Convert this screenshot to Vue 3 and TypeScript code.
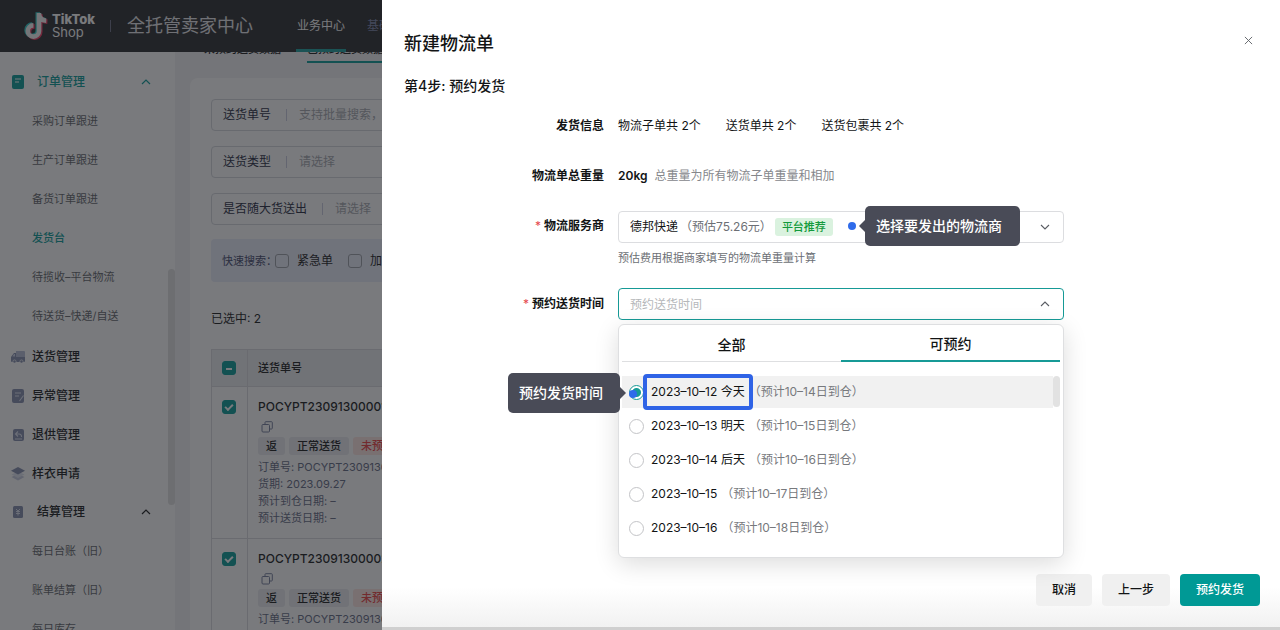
<script setup lang="ts">
import { ref } from 'vue'

interface MenuGroup {
  label: string
  icon: string
  open?: boolean
  active?: boolean
  children?: string[]
}

const menu: MenuGroup[] = [
  {
    label: '订单管理',
    icon: 'order',
    open: true,
    active: true,
    children: ['采购订单跟进', '生产订单跟进', '备货订单跟进', '发货台', '待揽收–平台物流', '待送货–快递/自送'],
  },
  { label: '送货管理', icon: 'truck' },
  { label: '异常管理', icon: 'note' },
  { label: '退供管理', icon: 'return' },
  { label: '样衣申请', icon: 'layers' },
  { label: '结算管理', icon: 'bill', open: true, children: ['每日台账（旧）', '账单结算（旧）', '每日库存'] },
]
const current = '发货台'

const filters = [
  { id: 'f-no', label: '送货单号', hint: '支持批量搜索，用逗号隔开' },
  { id: 'f-type', label: '送货类型', hint: '请选择' },
  { id: 'f-with', label: '是否随大货送出', hint: '请选择' },
]

const orders = ['POCYPT23091300001', 'POCYPT23091300002']

const options = [
  { date: '2023–10–12 今天', eta: '（预计10–14日到仓）' },
  { date: '2023–10–13 明天', eta: '（预计10–15日到仓）' },
  { date: '2023–10–14 后天', eta: '（预计10–16日到仓）' },
  { date: '2023–10–15', eta: '（预计10–17日到仓）' },
  { date: '2023–10–16', eta: '（预计10–18日到仓）' },
]
const picked = ref(0)
const provider = ref('德邦快递')
const slot = ref('')
</script>

<template>
  <div class="app">
    <header class="top">
      <svg class="logo" viewBox="0 0 24 28" aria-hidden="true">
        <g fill="none" stroke-width="4.6">
          <path d="M14 1v18a5.600 5.600 0 1 1-5.600-5.600M14 2c.4 4 3 6.400 7.200 6.600" stroke="#25c9c5" transform="translate(-1.200 -.8)" />
          <path d="M14 1v18a5.600 5.600 0 1 1-5.600-5.600M14 2c.4 4 3 6.400 7.200 6.600" stroke="#f0305a" transform="translate(1.200 1)" />
          <path d="M14 1v18a5.600 5.600 0 1 1-5.600-5.600M14 2c.4 4 3 6.400 7.200 6.600" stroke="#f4f4f4" />
        </g>
      </svg>
      <div class="brand"><strong>TikTok</strong><span>Shop</span></div>
      <i class="bar"></i>
      <h1>全托管卖家中心</h1>
      <nav class="topnav">
        <a href="#biz" class="on">业务中心</a>
        <a href="#base">基础信息</a>
      </nav>
    </header>

    <div class="body">
      <nav class="side">
        <div v-for="g in menu" :key="g.label" class="group">
          <a href="#menu" class="head" :class="{ active: g.active, wide: g.children }">
            <svg v-if="g.icon === 'order'" class="ico" viewBox="0 0 14 14"><rect x="1" width="12" height="14" rx="2" fill="#009995" /><path d="M4 4h6M4 7h4" stroke="#fff" stroke-width="1.200" /></svg>
            <svg v-else-if="g.icon === 'truck'" class="ico" viewBox="0 0 14 14"><path d="M5 1h8a1 1 0 0 1 1 1v5H5z" fill="#b3bbd4" /><path d="M3 3h2v4h9v4a1 1 0 0 1-1 1H1a1 1 0 0 1-1-1V7z" fill="#808bab" /><path d="M1.500 6.500l1.500-2.500h1v2.500z" fill="#cfd6ea" /><circle cx="3.500" cy="11.500" r="1.600" fill="#808bab" stroke="#fff" stroke-width=".7" /><circle cx="10.500" cy="11.500" r="1.600" fill="#808bab" stroke="#fff" stroke-width=".7" /></svg>
            <svg v-else-if="g.icon === 'note'" class="ico" viewBox="0 0 14 14"><rect x="1" width="12" height="14" rx="2" fill="#808bab" /><path d="M4 4h6M4 7h4M8.500 12l4-5.500" stroke="#dde2f0" stroke-width="1.100" /></svg>
            <svg v-else-if="g.icon === 'return'" class="ico" viewBox="0 0 14 14"><rect x="2" y="1" width="11" height="12" rx="2" fill="#808bab" /><path d="M7 3.500L4.500 6 7 8.500M4.500 6H8a2.500 2.500 0 0 1 2.500 3M4 11h7" fill="none" stroke="#dde2f0" stroke-width="1.100" /></svg>
            <svg v-else-if="g.icon === 'layers'" class="ico" viewBox="0 0 14 14"><path d="M7 7l6.500 3L7 13.500.5 10z" fill="#c5cbdf" /><path d="M7 4.500l6.500 3L7 11 .5 7.500z" fill="#dfe3f0" /><path d="M7 0l7 3.800-7 3.700L0 3.800z" fill="#808bab" /></svg>
            <svg v-else class="ico" viewBox="0 0 14 14"><rect x="2" y="1" width="10" height="12" rx="1.500" fill="#808bab" /><path d="M5 4l2 2 2-2M7 6v4.500M5 6.500h4M5 8.500h4" fill="none" stroke="#dde2f0" /></svg>
            <span>{{ g.label }}</span>
            <svg v-if="g.open" class="caret" viewBox="0 0 10 6"><path d="M1 5l4-4 4 4" fill="none" stroke="currentColor" stroke-width="1.200" /></svg>
          </a>
          <div v-if="g.children" class="subs">
            <a v-for="c in g.children" :key="c" href="#sub" :class="{ active: c === current }">{{ c }}</a>
          </div>
        </div>
        <i class="thumb"></i>
      </nav>

      <main class="main">
        <div class="tabs"><a href="#t1">未预约送货数据</a><a href="#t2" class="on">已预约送货数据</a></div>
        <section class="card">
          <div v-for="f in filters" :key="f.id" class="filter">
            <label :for="f.id">{{ f.label }}</label>
            <input :id="f.id" type="text" :placeholder="f.hint" />
          </div>
          <div class="quick">
            <span>快速搜索：</span>
            <label><input type="checkbox" />紧急单</label>
            <label><input type="checkbox" />加急</label>
          </div>
          <p class="chosen">已选中: 2</p>
          <table>
            <thead>
              <tr>
                <th class="tick"><input type="checkbox" class="part" checked aria-label="全选" /></th>
                <th>送货单号</th>
              </tr>
            </thead>
            <tbody>
              <tr v-for="o in orders" :key="o">
                <td class="tick"><input type="checkbox" checked :aria-label="o" /></td>
                <td>
                  <div class="no">{{ o }}</div>
                  <svg class="copy" viewBox="0 0 12 12"><g fill="none" stroke="#707a99"><rect x="1" y="3.500" width="7.500" height="7.500" rx="1" /><path d="M4 3.500V1.500a.8.800 0 0 1 .8-.8h5.700a.8.800 0 0 1 .8.800v5.700a.8.800 0 0 1-.8.800h-2" /></g></svg>
                  <div class="tags"><b>返</b><b>正常送货</b><b class="red">未预约</b></div>
                  <p>订单号: {{ o }}</p>
                  <p>货期: 2023.09.27</p>
                  <p>预计到仓日期: –</p>
                  <p>预计送货日期: –</p>
                </td>
              </tr>
            </tbody>
          </table>
        </section>
      </main>
    </div>

    <div class="mask"></div>

    <aside class="drawer" role="dialog" aria-labelledby="drawer-title">
      <div class="title">
        <h2 id="drawer-title">新建物流单</h2>
        <button type="button" class="close" aria-label="关闭">
          <svg viewBox="0 0 10 10"><path d="M1 1l8 8M9 1L1 9" stroke="#5a5d63" stroke-width="1" /></svg>
        </button>
      </div>
      <h3>第4步: 预约发货</h3>

      <form class="form" @submit.prevent>
        <span class="lab">发货信息</span>
        <div class="cell facts"><span>物流子单共 2个</span><span>送货单共 2个</span><span>送货包裹共 2个</span></div>

        <span class="lab">物流单总重量</span>
        <div class="cell"><b>20kg</b><span class="muted">总重量为所有物流子单重量和相加</span></div>

        <label class="lab" for="provider"><i>*</i> 物流服务商</label>
        <div class="service">
          <div class="select">
            <select id="provider" v-model="provider"><option>德邦快递</option></select>
            <div class="extra"><span>（预估75.26元）</span><b>平台推荐</b></div>
            <svg class="arrow" viewBox="0 0 10 6"><path d="M1 1l4 4 4-4" fill="none" stroke="#5a5d63" stroke-width="1.100" /></svg>
            <div class="tip tip-right"><i class="dot"></i>选择要发出的物流商</div>
          </div>
          <p>预估费用根据商家填写的物流单重量计算</p>
        </div>

        <label class="lab" for="slot"><i>*</i> 预约送货时间</label>
        <div class="select focus">
          <input id="slot" v-model="slot" type="text" placeholder="预约送货时间" />
          <svg class="arrow" viewBox="0 0 10 6"><path d="M1 5l4-4 4 4" fill="none" stroke="#5a5d63" stroke-width="1.100" /></svg>
          <div class="menu">
            <div class="menu-tabs">
              <button type="button">全部</button>
              <button type="button" class="on">可预约</button>
            </div>
            <div class="list">
              <label v-for="(o, i) in options" :key="o.date" :class="{ on: i === picked }">
                <input v-model="picked" type="radio" name="slot" :value="i" />
                <span class="date">{{ o.date }}</span><span class="eta">{{ o.eta }}</span>
              </label>
              <i class="scroll"></i>
            </div>
            <div class="tip tip-left">预约发货时间<i class="dot"></i></div>
          </div>
        </div>
      </form>

      <footer>
        <button type="button">取消</button>
        <button type="button">上一步</button>
        <button type="button" class="primary">预约发货</button>
      </footer>
    </aside>
  </div>
</template>

<style>
body {
  margin: 0;
  overflow: hidden;
}
</style>

<style scoped>
.app {
  height: 100vh;
  overflow: hidden;
  display: flex;
  flex-direction: column;
  position: relative;
  font: 13px/20px Inter, "Noto Sans CJK SC", sans-serif;
  color: #121415;
  background: #fff;
}
.app * { box-sizing: border-box; }
h1, h2, h3, p { margin: 0; font-weight: 400; }
a { color: inherit; text-decoration: none; }
button, input, select { font: inherit; color: inherit; margin: 0; }
button { border: 0; padding: 0; background: none; cursor: pointer; }

.top {
  flex: none;
  height: 52px;
  display: flex;
  align-items: center;
  padding-left: 25px;
  background: #252629;
  color: #fff;
  position: relative;
  z-index: 1;
}
.logo { width: 24px; height: 28px; margin-right: 3px; overflow: visible; }
.brand { display: flex; flex-direction: column; width: 46px; font-size: 13px; line-height: 13px; }
.brand strong { font-weight: 800; }
.bar { width: 1px; height: 12px; margin: 0 16px 0 12px; background: #6a6d82; }
h1 { font-size: 18px; line-height: 26px; white-space: nowrap; color: #e6e6ea; }
.topnav { display: flex; gap: 20px; margin-left: 43px; height: 52px; line-height: 52px; white-space: nowrap; font-size: 12px; color: #7b83a8; }
.topnav a { padding: 0 1px; }
.topnav .on { color: #fff; border-bottom: 3px solid #169e9b; }

.body { flex: 1; min-height: 0; display: flex; }
.side { flex: none; width: 175px; padding-top: 11px; overflow: hidden; position: relative; }
.head { display: flex; align-items: center; height: 39px; padding: 0 24px 0 11px; font-weight: 500; }
.head.wide { padding-bottom: 1px; }
.head span { flex: 1; margin-left: 7px; font-size: 12px; }
.head.wide span { margin-left: 12px; }
.ico { width: 14px; height: 14px; }
.caret { width: 10px; height: 6px; }
.active { color: #009995; }
.subs { display: flex; flex-direction: column; padding: 0 0 1px 32px; font-size: 11px; color: #5c5f66; }
.subs a { height: 39px; line-height: 39px; white-space: nowrap; }
.subs .active { color: #009995; font-weight: 500; }
.thumb { position: absolute; right: 0; top: 217px; width: 7px; height: 236px; border-radius: 4px; background: #e0e0e0; }

.main { flex: 1; min-width: 0; padding-left: 15px; background: #f2f2f4; }
.tabs { display: flex; gap: 26px; height: 11px; padding-left: 14px; align-items: flex-end; white-space: nowrap; font-size: 11px; font-weight: 500; }
.tabs a { height: 24px; line-height: 20px; }
.tabs .on { border-bottom: 2px solid #009995; }
.card { margin-top: 15px; padding: 21px; border-radius: 8px; background: #fff; }
.filter { display: flex; align-items: center; height: 32px; margin-bottom: 14px; padding-left: 11px; border: 1px solid #d4d6dc; border-radius: 4px; font-size: 12px; }
.filter:first-child, .filter:nth-child(2) { margin-bottom: 15px; }
.filter label { padding-right: 15px; border-right: 1px solid #c7cbdf; line-height: 12px; white-space: nowrap; color: #20243a; }
.filter input { flex: 1; border: 0; padding: 0 0 0 12px; outline: 0; background: none; }
.filter input::placeholder { color: #a3a6ad; opacity: 1; }
.quick { display: flex; align-items: center; height: 43px; padding-left: 11px; background: #e9edfa; border-radius: 4px; }
.quick span { width: 53px; font-size: 11px; color: #3c4468; white-space: nowrap; }
.quick label { display: flex; align-items: center; gap: 8px; margin-right: 15px; font-size: 12px; white-space: nowrap; }
input[type='checkbox'] { appearance: none; width: 14px; height: 14px; border: 1px solid #9a9da6; border-radius: 3px; display: grid; place-items: center; }
.chosen { padding: 27px 0 20px; font-size: 12px; }
table { width: 100%; border-collapse: collapse; border: 1px solid #d9dade; }
th, td { border: 1px solid #d9dade; padding: 0 10px; text-align: left; vertical-align: top; }
th { height: 37px; vertical-align: middle; background: #ecedf0; font-size: 11px; font-weight: 500; }
.tick { width: 36px; }
td { height: 152px; padding-top: 10px; }
.tick input { background: #009995; border-color: #009995; }
td.tick { padding-top: 13px; }
.tick input::after { content: ''; width: 6px; height: 3px; border: solid #fff; border-width: 0 0 2px 2px; transform: translateY(-1px) rotate(-45deg); }
.tick input.part::after { height: 2px; border-width: 0 0 2px; transform: none; }
.no { font-size: 12px; line-height: 20px; font-weight: 500; white-space: nowrap; }
.copy { display: block; width: 12px; height: 12px; margin: 4px 0 4px 3px; }
.tags { display: flex; gap: 4px; margin-bottom: 4px; }
.tags b { padding: 0 8px; border-radius: 3px; background: #ebecef; font-size: 11px; line-height: 18px; font-weight: 500; white-space: nowrap; }
.tags .red { color: #ee3b3b; background: #ffe6e2; }
td p { font-size: 11px; line-height: 17px; color: #5d6680; white-space: nowrap; }

.mask { position: absolute; inset: 0; z-index: 2; background: rgba(32, 33, 38, 0.6); }

.drawer {
  position: absolute;
  z-index: 3;
  inset: 0 0 0 382px;
  display: flex;
  flex-direction: column;
  padding: 28px 20px 21px 22px;
  background: linear-gradient(#fff calc(100% - 40px), #f1f1f1);
  border-bottom: 3px solid #cfcfcf;
}
.title { display: flex; justify-content: space-between; }
h2 { font-size: 18px; line-height: 32px; font-weight: 500; }
.close { width: 24px; height: 24px; }
.close svg { width: 9px; height: 9px; }
h3 { margin-top: 15px; font-size: 14px; line-height: 22px; font-weight: 500; }
.form { display: grid; grid-template-columns: 200px minmax(0, 446px); column-gap: 14px; margin-top: 13px; }
.lab { text-align: right; line-height: 32px; font-size: 12px; font-weight: 600; }
.lab i { color: #e5484d; font-style: normal; font-weight: 400; }
.cell { height: 50px; line-height: 32px; font-size: 12px; white-space: nowrap; }
.facts { display: flex; gap: 25px; }
.cell b { font-weight: 600; }
.muted { margin-left: 7px; color: #85878b; }
.service { height: 78px; }
.service p { margin-top: 5px; font-size: 11px; color: #6c6f75; }
.select { position: relative; display: grid; grid-template-columns: minmax(0, 1fr); align-items: center; height: 32px; margin-top: 1px; border: 1px solid #dcdde0; border-radius: 4px; font-size: 12px; background: #fff; }
.select > select, .select > input, .extra, .arrow { grid-area: 1 / 1; }
.select > select, .select > input { width: 100%; height: 30px; padding: 0 11px; border: 0; outline: 0; background: none; appearance: none; }
.select > input::placeholder { color: #b5b7ba; opacity: 1; }
.focus { border-color: #169a96; margin-top: 0; }
.arrow { justify-self: end; width: 10px; height: 6px; margin-right: 13px; pointer-events: none; }
.extra { display: flex; align-items: center; gap: 3px; padding-left: 61px; pointer-events: none; color: #6c6f75; }
.extra b { padding: 0 7px; border-radius: 3px; background: #daf2df; color: #139a3c; font-size: 11px; line-height: 18px; font-weight: 500; }

.tip { position: absolute; z-index: 5; padding: 0 11px; border-radius: 5px; background: #494b57; color: #fff; font-size: 14px; line-height: 40px; font-weight: 500; white-space: nowrap; }
.tip::before { content: ''; position: absolute; top: 14px; border: 6px solid transparent; }
.tip-right { left: 246px; top: -6px; width: 155px; }
.tip-right::before { left: -12px; border-right-color: #494b57; }
.tip-left { right: 443px; top: 48px; width: 112px; }
.tip-left::before { right: -12px; border-left-color: #494b57; }
.dot { position: absolute; width: 8px; height: 8px; border-radius: 50%; background: #2f6bea; }
.tip-right .dot { left: -17px; top: 16px; }
.tip-left .dot { right: -17px; top: 17px; }

.menu { position: absolute; z-index: 4; inset: 35px -1px auto -1px; height: 234px; padding: 3px; border: 1px solid #dedfe1; border-radius: 6px; background: #fff; box-shadow: 0 6px 24px rgba(0, 0, 0, 0.14); }
.menu-tabs { display: grid; grid-template-columns: 1fr 1fr; font-size: 14px; }
.menu-tabs button { height: 34px; border-bottom: 1px solid #dedfe1; font-weight: 500; }
.menu-tabs .on { border-bottom: 2px solid #169a96; }
.list { position: relative; display: flex; flex-direction: column; gap: 2px; margin-top: 14px; padding-right: 7px; }
.list label { display: flex; align-items: center; height: 32px; padding-left: 7px; white-space: nowrap; }
.list label.on { background: #f1f1f1; }
.list input { appearance: none; width: 15px; height: 15px; border: 1px solid #c3c4c7; border-radius: 50%; background: #fff; }
.list input:checked { border-color: #169a96; background: radial-gradient(circle, #169a96 4px, #fff 5px); }
.date { margin-left: 7px; font-size: 12px; }
.list .on .date { margin: 0 -7px 0 -1px; padding: 0 4px; border: 4px solid #2f63e6; border-radius: 4px; line-height: 28px; }
.eta { margin-left: 4px; color: #77797d; font-size: 12px; }
.list .on .eta { margin-left: 3px; }
.scroll { position: absolute; right: 0; top: 0; width: 7px; height: 31px; border-radius: 4px; background: #e2e2e2; }

footer { display: flex; justify-content: flex-end; gap: 10px; margin-top: auto; }
footer button { height: 32px; padding: 0 16px; border-radius: 4px; background: #f0f0f0; font-size: 12px; font-weight: 500; }
footer .primary { background: #009995; color: #fff; }
</style>
